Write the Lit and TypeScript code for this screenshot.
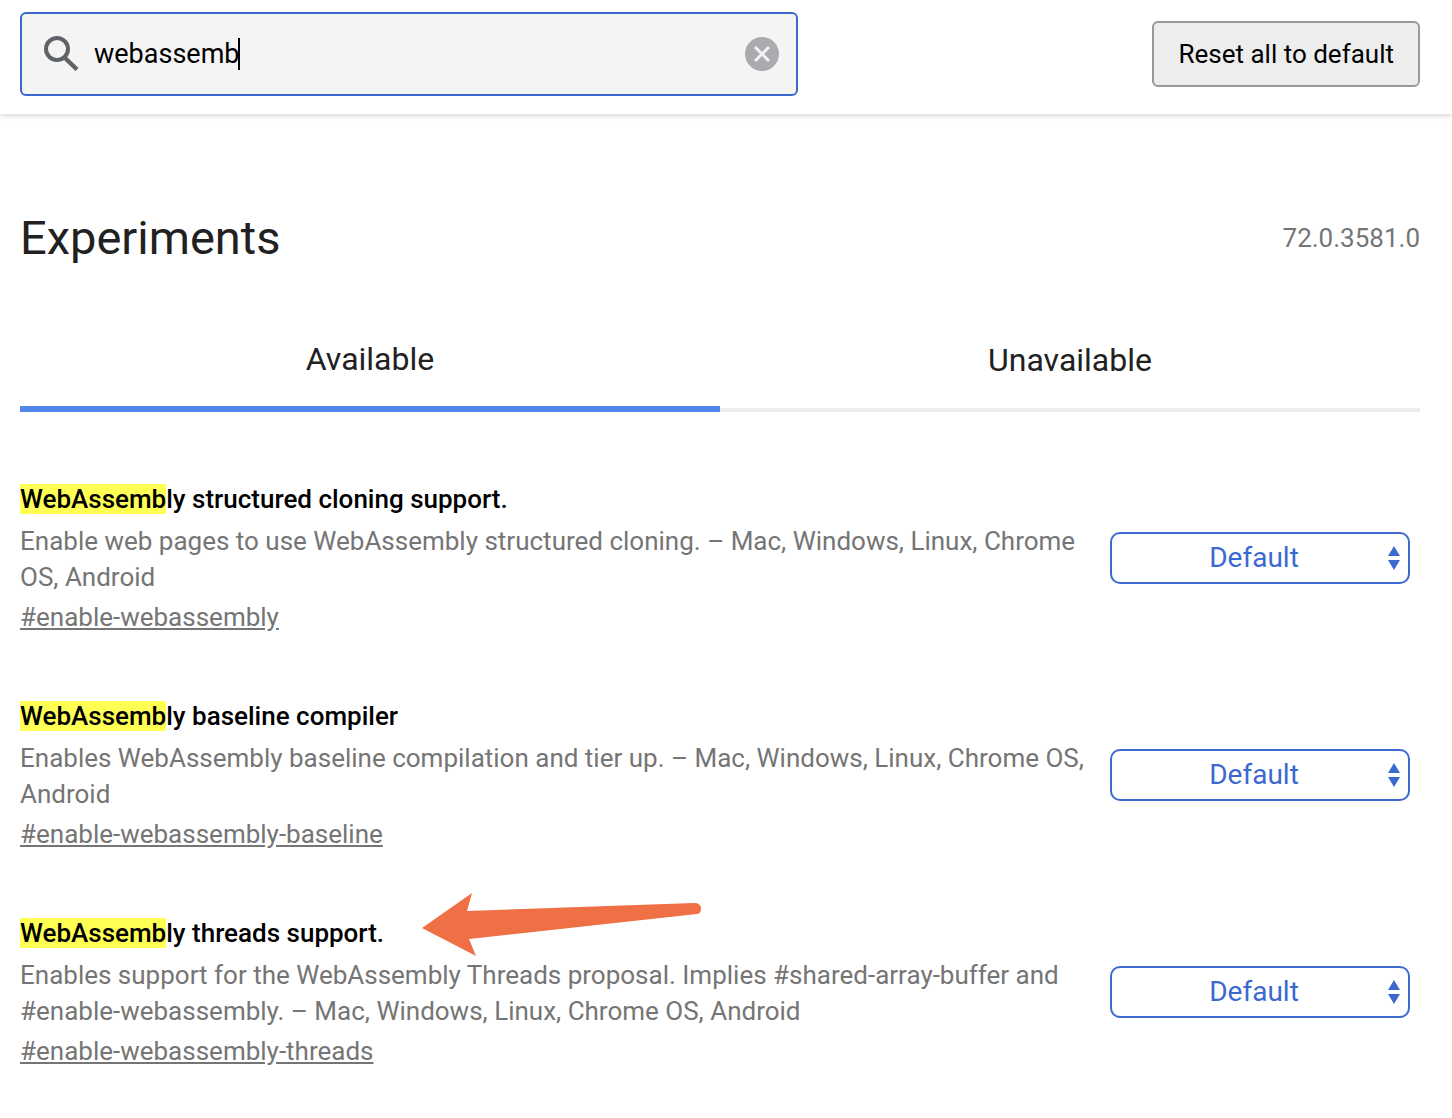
import { LitElement, html, css } from "lit";
import { customElement, state } from "lit/decorators.js";

interface Experiment {
  name: string;
  description: string;
  platforms: string;
  id: string;
  pointed?: boolean;
}

const EXPERIMENTS: Experiment[] = [
  {
    name: "WebAssembly structured cloning support.",
    description: "Enable web pages to use WebAssembly structured cloning.",
    platforms: "Mac, Windows, Linux, Chrome OS, Android",
    id: "enable-webassembly",
  },
  {
    name: "WebAssembly baseline compiler",
    description: "Enables WebAssembly baseline compilation and tier up.",
    platforms: "Mac, Windows, Linux, Chrome OS, Android",
    id: "enable-webassembly-baseline",
  },
  {
    name: "WebAssembly threads support.",
    description:
      "Enables support for the WebAssembly Threads proposal. Implies #shared-array-buffer and #enable-webassembly.",
    platforms: "Mac, Windows, Linux, Chrome OS, Android",
    id: "enable-webassembly-threads",
    pointed: true,
  },
];

@customElement("app-root")
export class AppRoot extends LitElement {
  @state() private query = "webassemb";

  static styles = css`
    :host {
      display: block;
      font-family: Roboto, "Liberation Sans", sans-serif;
      font-size: 26px;
      line-height: 36px;
      color: #757575;
      background: #fff;
    }
    * {
      box-sizing: border-box;
    }
    button,
    input,
    select {
      font: inherit;
      margin: 0;
    }
    header {
      display: flex;
      align-items: center;
      justify-content: space-between;
      gap: 32px;
      padding: 12px 32px 18px 20px;
      box-shadow: 0 2px 6px rgba(0, 0, 0, 0.16);
    }
    .search {
      display: flex;
      align-items: center;
      gap: 14px;
      flex: 0 1 778px;
      height: 84px;
      padding: 0 17px 0 20px;
      border: 2px solid #3c69d0;
      border-radius: 6px;
      background: #f4f4f4;
    }
    .search svg {
      display: block;
      flex: none;
    }
    .field {
      position: relative;
      display: flex;
      flex: 1;
      min-width: 0;
    }
    .field input {
      width: 100%;
      padding: 0;
      border: 0;
      outline: 0;
      background: none;
      color: #000;
      font-size: 27px;
    }
    .caret {
      position: absolute;
      left: 144px;
      top: 2px;
      width: 2px;
      height: 32px;
      background: #000;
    }
    .clear {
      padding: 0;
      border: 0;
      background: none;
    }
    .reset {
      flex: none;
      height: 66px;
      padding: 0 24px;
      border: 2px solid #999;
      border-radius: 6px;
      background: #ededed;
      color: #000;
    }
    .title {
      display: flex;
      align-items: center;
      justify-content: space-between;
      padding: 92px 32px 0 20px;
    }
    h1 {
      margin: 0;
      font-size: 47px;
      line-height: 64px;
      font-weight: 400;
      color: #212121;
    }
    .tabs {
      display: flex;
      padding: 60px 32px 0 20px;
    }
    .tab {
      flex: 1;
      height: 82px;
      padding: 0 0 18px;
      border: 0;
      border-bottom: 4px solid #eee;
      background: none;
      font-size: 32px;
      color: #212121;
    }
    .tab.selected {
      border-bottom: 6px solid #4f87ec;
    }
    .list {
      display: grid;
      gap: 63px;
      padding: 69px 42px 48px 20px;
    }
    .experiment {
      display: grid;
      grid-template-columns: minmax(0, 1fr) 300px;
      column-gap: 22px;
      align-items: center;
    }
    .heading {
      position: relative;
      width: fit-content;
      margin-bottom: 6px;
    }
    h2 {
      margin: 0;
      font-size: 26px;
      font-weight: 500;
      color: #000;
    }
    mark {
      background: #ffff54;
      color: inherit;
    }
    p {
      margin: 0;
    }
    .link {
      display: block;
      width: fit-content;
      margin-top: 4px;
      color: inherit;
    }
    .arrow {
      position: absolute;
      left: 100%;
      top: -22px;
      margin-left: 38px;
    }
    .choice {
      position: relative;
    }
    .choice select {
      display: block;
      width: 100%;
      height: 52px;
      padding: 0 12px 0 0;
      appearance: none;
      border: 2px solid #3c69d0;
      border-radius: 10px;
      background: #fff;
      color: #3c69d0;
      font-size: 28px;
      text-align: center;
      text-align-last: center;
    }
    .choice svg {
      position: absolute;
      right: 10px;
      top: 14px;
      pointer-events: none;
    }
  `;

  private highlight(name: string) {
    const at = name.toLowerCase().indexOf(this.query.toLowerCase());
    if (!this.query || at < 0) return name;
    const end = at + this.query.length;
    return html`${name.slice(0, at)}<mark>${name.slice(at, end)}</mark>${name.slice(end)}`;
  }

  private row(e: Experiment) {
    return html`<section class="experiment">
      <div>
        <div class="heading">
          <h2 id=${`${e.id}-name`}>${this.highlight(e.name)}</h2>
          ${e.pointed
            ? html`<svg class="arrow" width="280" height="64" viewBox="0 0 280 64" aria-hidden="true">
                <path d="M0 35 50 0 45 18 272 10Q279 10 279 15.500Q279 20.500 275 21L47 46 54 63Z" fill="#ee7044" />
              </svg>`
            : ""}
        </div>
        <p>${`${e.description} – ${e.platforms}`}</p>
        <a class="link" href=${`#${e.id}`}>${`#${e.id}`}</a>
      </div>
      <div class="choice">
        <select aria-labelledby=${`${e.id}-name`}>
          <option>Default</option>
          <option>Enabled</option>
          <option>Disabled</option>
        </select>
        <svg width="12" height="24" viewBox="0 0 12 24" aria-hidden="true">
          <path d="M6 0 12 10H0ZM6 24 0 14H12Z" fill="#3c69d0" />
        </svg>
      </div>
    </section>`;
  }

  render() {
    return html`
      <header>
        <div class="search">
          <svg width="38" height="38" viewBox="0 0 38 38" aria-hidden="true">
            <circle cx="15" cy="14" r="11" fill="none" stroke="#5f6368" stroke-width="4" />
            <path d="M23 23 35 34.500" stroke="#5f6368" stroke-width="4.500" />
          </svg>
          <div class="field">
            <input
              type="text"
              aria-label="Search flags"
              .value=${this.query}
              @input=${(ev: Event) => (this.query = (ev.target as HTMLInputElement).value)}
            />
            <span class="caret"></span>
          </div>
          <button class="clear" aria-label="Clear search" @click=${() => (this.query = "")}>
            <svg width="34" height="34" viewBox="0 0 34 34" aria-hidden="true">
              <circle cx="17" cy="17" r="17" fill="#a9abaf" />
              <path d="M10 10 24 24M24 10 10 24" stroke="#f4f4f4" stroke-width="3" />
            </svg>
          </button>
        </div>
        <button class="reset">Reset all to default</button>
      </header>
      <main>
        <div class="title">
          <h1>Experiments</h1>
          <span>72.0.3581.0</span>
        </div>
        <div class="tabs" role="tablist">
          <button class="tab selected" role="tab" aria-selected="true">Available</button>
          <button class="tab" role="tab" aria-selected="false">Unavailable</button>
        </div>
        <div class="list">${EXPERIMENTS.map((e) => this.row(e))}</div>
      </main>
    `;
  }
}
